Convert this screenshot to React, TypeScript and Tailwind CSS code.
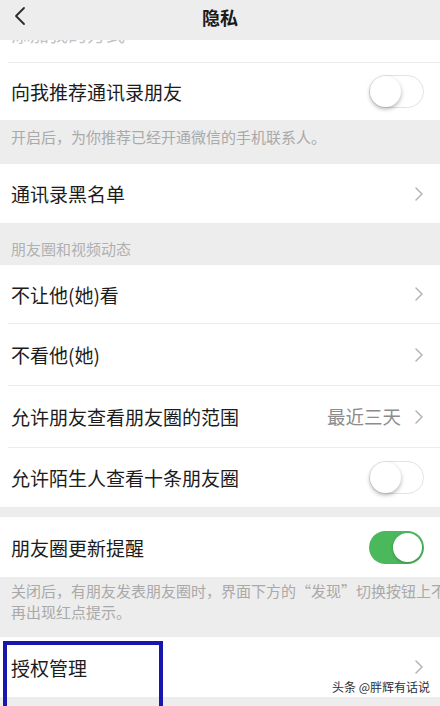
import React from "react";

const font = { fontFamily: '"Noto Sans CJK SC", "Noto Sans", sans-serif' };

function Chevron() {
  return (
    <svg width="10" height="16" viewBox="0 0 10 16" className="shrink-0">
      <path d="M2 2 L8 8 L2 14" fill="none" stroke="#b5b5b5" strokeWidth="1.5" strokeLinecap="round" strokeLinejoin="round" />
    </svg>
  );
}

function Toggle({ on }: { on?: boolean }) {
  if (on) {
    return (
      <div className="w-[55px] h-[33px] rounded-full bg-[#4bb85c] relative shrink-0">
        <div className="absolute right-[2px] top-[2px] w-[29px] h-[29px] rounded-full bg-white shadow-[0_1px_3px_rgba(0,0,0,0.25)]" />
      </div>
    );
  }
  return (
    <div className="w-[55px] h-[33px] rounded-full bg-white border border-[#e2e2e2] relative shrink-0">
      <div className="absolute left-0 top-0 w-[31px] h-[31px] rounded-full bg-white shadow-[0_2px_4px_rgba(0,0,0,0.3)]" />
    </div>
  );
}

function Row({ label, h, right, sep }: { label: string; h: string; right?: React.ReactNode; sep?: boolean }) {
  return (
    <div className="bg-white">
      <div className={`${h} flex items-center pl-[11px] pr-[16px]`}>
        <span className="flex-1 text-[19px] text-[#1c1c1c] leading-none">{label}</span>
        {right}
      </div>
      {sep && <div className="ml-[8px] h-px bg-[#ececec]" />}
    </div>
  );
}

export default function App() {
  return (
    <div className="w-[440px] h-[706px] overflow-hidden bg-[#ededed] relative" style={font}>
      {/* header */}
      <div className="h-[40px] bg-[#ededed] flex items-center justify-center relative">
        <svg width="14" height="20" viewBox="0 0 14 20" className="absolute left-[13px] top-[6px]">
          <path d="M11 2 L3 10 L11 18" fill="none" stroke="#2a2a2a" strokeWidth="1.8" strokeLinecap="round" strokeLinejoin="round" />
        </svg>
        <span className="text-[18px] font-bold text-[#1a1a1a] leading-none -mt-[7px]">隐私</span>
      </div>

      {/* row scrolled under the header */}
      <div className="bg-white">
        <div className="h-[22px] overflow-hidden pl-[11px]">
          <div className="text-[19px] text-[#c4c4c4] leading-[19px] -mt-[16px]">添加我的方式</div>
        </div>
        <div className="ml-[8px] h-px bg-[#ececec]" />
      </div>

      <Row label="向我推荐通讯录朋友" h="h-[57px]" right={<Toggle />} />

      <div className="h-[44px] pl-[11px] pt-[6px] text-[15px] text-[#a9a9a9] leading-[21px]">
        开启后，为你推荐已经开通微信的手机联系人。
      </div>

      <Row label="通讯录黑名单" h="h-[59px]" right={<Chevron />} />

      <div className="h-[42px] pl-[11px] pt-[17px] text-[15px] text-[#b0b0b0] leading-[18px]">朋友圈和视频动态</div>

      <Row label="不让他(她)看" h="h-[58px]" right={<Chevron />} sep />
      <Row label="不看他(她)" h="h-[61px]" right={<Chevron />} sep />
      <Row
        label="允许朋友查看朋友圈的范围"
        h="h-[61px]"
        right={
          <div className="flex items-center gap-[13px]">
            <span className="text-[18.5px] text-[#8c8c8c] leading-none">最近三天</span>
            <Chevron />
          </div>
        }
        sep
      />
      <Row label="允许陌生人查看十条朋友圈" h="h-[59px]" right={<Toggle />} />

      <div className="h-[10px]" />

      <Row label="朋友圈更新提醒" h="h-[60px]" right={<Toggle on />} />

      <div className="h-[60px] pl-[11px] pt-[3px] text-[15px] text-[#a9a9a9] leading-[21px] overflow-hidden">
        <div className="whitespace-nowrap">关闭后，有朋友发表朋友圈时，界面下方的“发现”切换按钮上不</div>
        <div>再出现红点提示。</div>
      </div>

      <Row label="授权管理" h="h-[60px]" right={<Chevron />} />

      {/* highlight box */}
      <div className="absolute left-[3px] top-[641px] w-[160px] h-[80px] border-[4px] border-[#1717b0]" />

      {/* watermark */}
      <div className="absolute right-[10px] top-[681px] text-[12px] text-[#2e2e2e] leading-none">头条 @胖辉有话说</div>
    </div>
  );
}
